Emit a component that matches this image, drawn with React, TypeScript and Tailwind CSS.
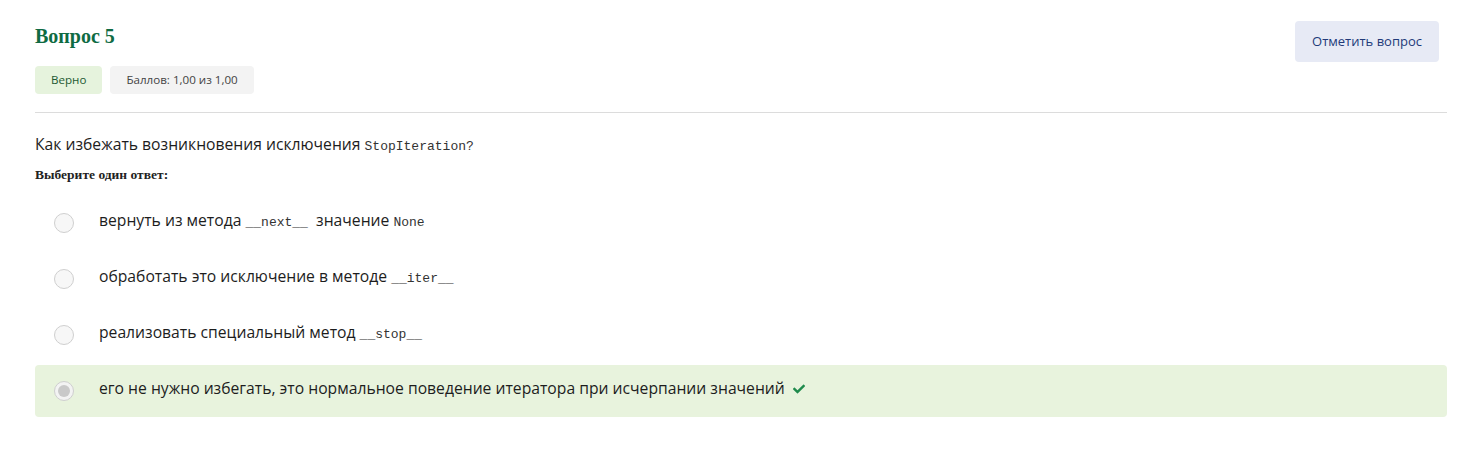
import { FaCheck } from 'react-icons/fa';

const sans = "font-['Open_Sans',sans-serif]";
const mono = "font-['Liberation_Mono',monospace] text-[13px] text-[#333]";

function Option({ children, correct }: { children: React.ReactNode; correct?: boolean }) {
  return (
    <div className={`flex items-center h-[52px] pl-[19px] rounded ${correct ? 'bg-[#e8f3dd]' : ''}`}>
      <span
        className={`w-[20px] h-[20px] shrink-0 rounded-full border border-[#cfcfcf] flex items-center justify-center ${
          correct ? 'bg-[#f3f3f3]' : 'bg-[#f7f7f7]'
        }`}
      >
        {correct && <span className="w-[12px] h-[12px] rounded-full bg-[#c9c9c9]" />}
      </span>
      <span className="ml-[25px] pb-[4px] text-[15.7px] text-[#1d1d1d] whitespace-nowrap">{children}</span>
    </div>
  );
}

export default function App() {
  return (
    <div className={`w-[1475px] h-[453px] bg-white pl-[35px] pr-[28px] pt-[21px] ${sans}`}>
      <div className="flex justify-between">
        <div>
          <h2 className="font-['Liberation_Serif',serif] font-bold text-[20px] text-[#0f6b43] leading-[30px]">Вопрос 5</h2>
          <div className="flex gap-2 mt-[15px]">
            <span className="h-[28px] px-[16px] rounded bg-[#e6f3dd] text-[#1e5a33] text-[11.6px] flex items-center">Верно</span>
            <span className="h-[28px] px-[16px] rounded bg-[#f3f3f3] text-[#444] text-[11.6px] flex items-center">
              Баллов: 1,00 из 1,00
            </span>
          </div>
        </div>
        <button className="h-[41px] px-[17px] mr-[8px] rounded bg-[#e7eaf5] text-[#223a79] text-[13px]">
          Отметить вопрос
        </button>
      </div>
      <div className="border-t border-[#dcdcdc] mt-[18px]" />
      <p className="mt-[21px] text-[15.7px] text-[#1d1d1d] leading-[20px]">
        Как избежать возникновения исключения <span className={mono}>StopIteration?</span>
      </p>
      <p className="mt-[8px] font-['Liberation_Serif',serif] font-bold text-[13.5px] text-[#222]">Выберите один ответ:</p>
      <div className="mt-[12px] flex flex-col gap-[4px]">
        <Option>
          вернуть из метода <span className={mono}>__next__</span>&nbsp; значение <span className={mono}>None</span>
        </Option>
        <Option>
          обработать это исключение в методе <span className={mono}>__iter__</span>
        </Option>
        <Option>
          реализовать специальный метод <span className={mono}>__stop__</span>
        </Option>
        <Option correct>
          его не нужно избегать, это нормальное поведение итератора при исчерпании значений
          <FaCheck className="inline ml-[8px] -mt-[2px] text-[#1f8a4c] w-[12px] h-[12px]" />
        </Option>
      </div>
    </div>
  );
}
